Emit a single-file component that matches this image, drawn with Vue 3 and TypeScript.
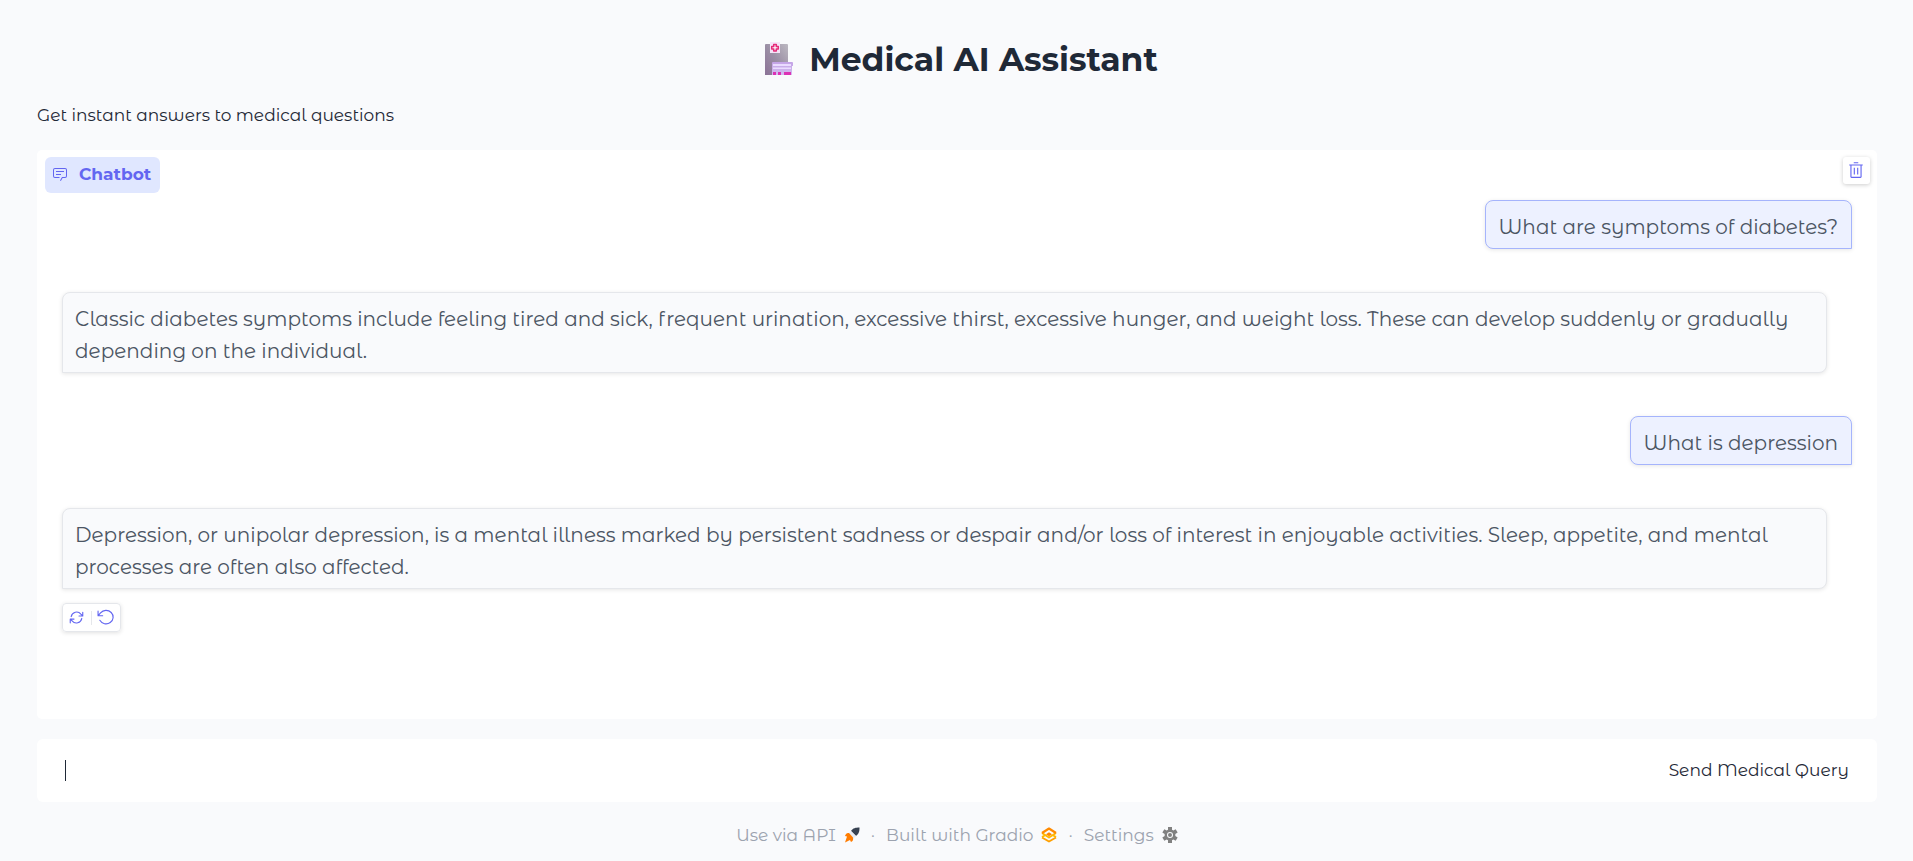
<script setup lang="ts">
import { ref } from 'vue'

interface Message {
  role: 'user' | 'bot'
  text: string
}

const messages = ref<Message[]>([
  { role: 'user', text: 'What are symptoms of diabetes?' },
  {
    role: 'bot',
    text: 'Classic diabetes symptoms include feeling tired and sick, frequent urination, excessive thirst, excessive hunger, and weight loss. These can develop suddenly or gradually depending on the individual.',
  },
  { role: 'user', text: 'What is depression' },
  {
    role: 'bot',
    text: 'Depression, or unipolar depression, is a mental illness marked by persistent sadness or despair and/or loss of interest in enjoyable activities. Sleep, appetite, and mental processes are often also affected.',
  },
])
const query = ref('')

function send() {
  const text = query.value.trim()
  if (!text) return
  messages.value.push({ role: 'user', text })
  query.value = ''
}
</script>

<template>
  <main class="page">
    <h1 class="title">
      <svg class="title-icon" viewBox="0 0 30 34" aria-hidden="true">
        <defs>
          <linearGradient id="building" x1="0" x2="1" y1="1" y2="0">
            <stop offset="0" stop-color="#8b7196" />
            <stop offset="0.5" stop-color="#9b8fa5" />
            <stop offset="1" stop-color="#bdb9c2" />
          </linearGradient>
          <linearGradient id="annex" x1="0" x2="0" y1="0" y2="1">
            <stop offset="0" stop-color="#c3a3e6" />
            <stop offset="1" stop-color="#d3bdf0" />
          </linearGradient>
        </defs>
        <path d="M1 3q0-1 1-1h21q1 0 1 1v30H1z" fill="url(#building)" />
        <path d="M6 0h10v11H6z" fill="#f4e3f7" />
        <path d="M9.700 2.500h2.600v2h2v2.600h-2v2h-2.600v-2h-2V4.500h2z" fill="#fbe9f5" stroke="#e52a78" stroke-width="1.500" stroke-linejoin="round" />
        <path d="M8 21q0-1 1-1h19q1 0 1 1v3h-1v9H8z" fill="url(#annex)" />
        <path d="M9 22h18v2H9zM9 25.500h18V27H9z" fill="#eadcff" />
        <path d="M9 30h3v3H9zM14 30h3v3h-3zM20 30h7v3h-7z" fill="#dc32b4" />
      </svg>
      <span>Medical AI Assistant</span>
    </h1>
    <p class="subtitle">Get instant answers to medical questions</p>

    <section class="chat" aria-label="Chatbot">
      <header class="chat-head">
        <div class="label">
          <svg viewBox="0 0 32 32" aria-hidden="true">
            <path fill="currentColor" d="M17.740 30 16 29l4-7h6a2 2 0 0 0 2-2V8a2 2 0 0 0-2-2H6a2 2 0 0 0-2 2v12a2 2 0 0 0 2 2h9v2H6a4 4 0 0 1-4-4V8a4 4 0 0 1 4-4h20a4 4 0 0 1 4 4v12a4 4 0 0 1-4 4h-4.840Z" />
            <path fill="currentColor" d="M8 10h16v2H8zm0 6h10v2H8z" />
          </svg>
          <span>Chatbot</span>
        </div>
        <button class="clear" type="button" aria-label="Clear" @click="messages = []">
          <svg viewBox="0 0 32 32" aria-hidden="true">
            <path fill="currentColor" d="M12 12h2v12h-2zm6 0h2v12h-2z" />
            <path fill="currentColor" d="M4 6v2h2v20a2 2 0 0 0 2 2h16a2 2 0 0 0 2-2V8h2V6zm4 22V8h16v20zM12 2h8v2h-8z" />
          </svg>
        </button>
      </header>
      <div class="messages">
        <p v-for="(message, i) in messages" :key="i" class="bubble" :class="message.role">{{ message.text }}</p>
      </div>
      <div class="actions">
        <button type="button" aria-label="Retry">
          <svg viewBox="0 0 24 24" fill="none" stroke="currentColor" stroke-width="1.800" stroke-linecap="round" stroke-linejoin="round" aria-hidden="true">
            <path d="M22 3.500v6h-6M2 20.500v-6h6M3.500 10.500a8.800 8.800 0 0 1 15.500-4l3 3M20.500 13.500a8.800 8.800 0 0 1-15.500 4l-3-3" />
          </svg>
        </button>
        <span class="divider"></span>
        <button class="undo" type="button" aria-label="Undo">
          <svg viewBox="0 0 24 24" fill="none" stroke="currentColor" stroke-width="1.600" stroke-linecap="round" stroke-linejoin="round" aria-hidden="true">
            <path d="M1.500 3v6.500H8M2 9l3-3.500A10 9.500 0 1 1 4 16" />
          </svg>
        </button>
      </div>
    </section>

    <form class="composer" @submit.prevent="send">
      <label class="field">
        <input v-model="query" type="text" aria-label="Medical query" />
      </label>
      <button type="submit">Send Medical Query</button>
    </form>

    <footer class="footer">
      <a href="#api">
        Use via API
        <svg viewBox="0 0 16 16" aria-hidden="true">
          <path d="M15.500.500c-4 0-6.500.500-8.500 3.500l5 5c3-2.500 3.500-4.500 3.500-8.500z" fill="#374151" />
          <path d="m7 4 5 5-2.500 2.500L4.500 6.500z" fill="#e8eaf0" />
          <path d="M5 6C2.500 5.500 1.500 7.500 1 9l2 .500-2 6L6 13l1 2c2-1 2.500-2.500 2-4.500z" fill="#ff7c00" />
        </svg>
      </a>
      <span class="dot">·</span>
      <a href="#gradio">
        Built with Gradio
        <svg viewBox="0 0 16 16" aria-hidden="true">
          <path d="m1 10.500 7 4 7-4" fill="none" stroke="#ffa000" stroke-width="2" stroke-linejoin="round" />
          <path d="m1 6 7 4.500L15 6M1 10l3.500-2M15 10l-3.500-2" fill="none" stroke="#ffb800" stroke-width="2" stroke-linejoin="round" />
          <path d="m1 6 7-4.500L15 6" fill="none" stroke="#ff8a00" stroke-width="2.200" stroke-linejoin="round" />
          <path d="m5 7.200 3-2 3 2-3 2z" fill="#ff8500" />
        </svg>
      </a>
      <span class="dot">·</span>
      <button type="button">
        Settings
        <svg viewBox="0 0 24 24" aria-hidden="true">
          <path fill="#808080" fill-rule="evenodd" d="M9 0h6v4l2 1.200 3.500-2L23.500 8.400 20 10.500v3l3.500 2.100-3 5.200-3.500-2-2 1.200v4H9v-4l-2-1.200-3.500 2-3-5.200L4 13.500v-3L.500 8.400l3-5.200 3.500 2L9 4zM12 7.500a4.500 4.500 0 1 0 0 9 4.500 4.500 0 0 0 0-9zM12 9a3 3 0 1 1 0 6 3 3 0 0 1 0-6z" />
        </svg>
      </button>
    </footer>
  </main>
</template>

<style>
body {
  margin: 0;
  background: #f9fafb;
}
</style>

<style scoped>
* {
  box-sizing: border-box;
}
.page {
  display: flex;
  flex-direction: column;
  min-height: 100vh;
  padding: 36px 36px 0 37px;
  color: #1f2937;
  background: #f9fafc;
  font-family: "Montserrat Alternates", Inter, "Open Sans", sans-serif;
  font-size: 17px;
  font-weight: 400;
}
button,
input {
  margin: 0;
  padding: 0;
  border: 0;
  color: inherit;
  background: none;
  font: inherit;
}
button {
  cursor: pointer;
}
svg {
  display: block;
  flex: none;
}
.title {
  display: flex;
  align-items: center;
  justify-content: center;
  gap: 15px;
  margin: 0;
  padding-left: 8px;
  font-family: Montserrat, Inter, sans-serif;
  font-size: 33px;
  font-weight: 700;
  line-height: 46px;
}
.title-icon {
  width: 30px;
  height: 34px;
}
.subtitle {
  margin: 21px 0 23px;
  line-height: 24px;
}
.chat {
  min-height: 569px;
  padding: 7px 7px 80px 8px;
  border-radius: 5px;
  background: #fff;
}
.chat-head {
  display: flex;
  align-items: flex-start;
  justify-content: space-between;
  height: 43px;
}
.label {
  display: flex;
  align-items: center;
  gap: 11px;
  height: 36px;
  padding: 0 9px 2px 7px;
  border-radius: 6px;
  color: #6366f1;
  background: #e0e7ff;
  font-family: Montserrat, Inter, sans-serif;
  font-size: 17px;
  font-weight: 700;
}
.label svg {
  width: 16px;
  height: 16px;
}
.clear {
  display: grid;
  place-items: center;
  width: 27px;
  height: 27px;
  padding: 0 1px 1px 0;
  border-radius: 3px;
  color: #6366f1;
  background: #fff;
  box-shadow: 0 1px 4px rgba(0, 0, 0, 0.2);
}
.clear svg {
  width: 18px;
  height: 18px;
}
.messages {
  display: flex;
  flex-direction: column;
  gap: 43px;
  padding: 0 18px 0 17px;
}
.bubble {
  margin: 0;
  padding: 10px 13px 5px 12px;
  border: 1px solid #e5e7eb;
  border-radius: 8px;
  color: #4b5563;
  font-size: 20px;
  line-height: 32px;
  box-shadow: 0 1px 4px rgba(0, 0, 0, 0.1);
}
.user {
  align-self: flex-end;
  border-color: #a5b4fc;
  border-bottom-right-radius: 0;
  background: #edf1ff;
}
.bot {
  align-self: stretch;
  margin-right: 25px;
  border-bottom-left-radius: 0;
  background: #f9fafc;
}
.actions {
  display: flex;
  align-items: center;
  width: 59px;
  height: 29px;
  margin: 14px 0 0 17px;
  padding: 0 6px;
  border: 1px solid #e5e7eb;
  border-radius: 4px;
  color: #6366f1;
  box-shadow: 0 1px 4px rgba(0, 0, 0, 0.12);
}
.actions svg {
  width: 15px;
  height: 15px;
}
.actions .undo svg {
  width: 17px;
  height: 17px;
}
.divider {
  width: 1px;
  height: 14px;
  margin: 0 5px 0 7px;
  background: #e5e7eb;
}
.composer {
  display: flex;
  align-items: center;
  height: 63px;
  margin-top: 20px;
  padding: 0 28px;
  border-radius: 6px;
  background: #fff;
}
.composer button {
  padding-bottom: 2px;
}
.field {
  display: flex;
  flex: 1;
  align-items: center;
}
.field::before {
  width: 1px;
  height: 21px;
  background: #1f2937;
  content: "";
}
.field input {
  flex: 1;
  min-width: 0;
  outline: 0;
}
.footer {
  display: flex;
  align-items: center;
  justify-content: center;
  margin-top: 20px;
  color: #9ca3af;
  line-height: 26px;
}
.footer a,
.footer button {
  display: flex;
  align-items: center;
  gap: 8px;
  color: inherit;
  text-decoration: none;
}
.footer svg {
  width: 16px;
  height: 16px;
}
.dot {
  margin: 0 11px;
}
</style>
